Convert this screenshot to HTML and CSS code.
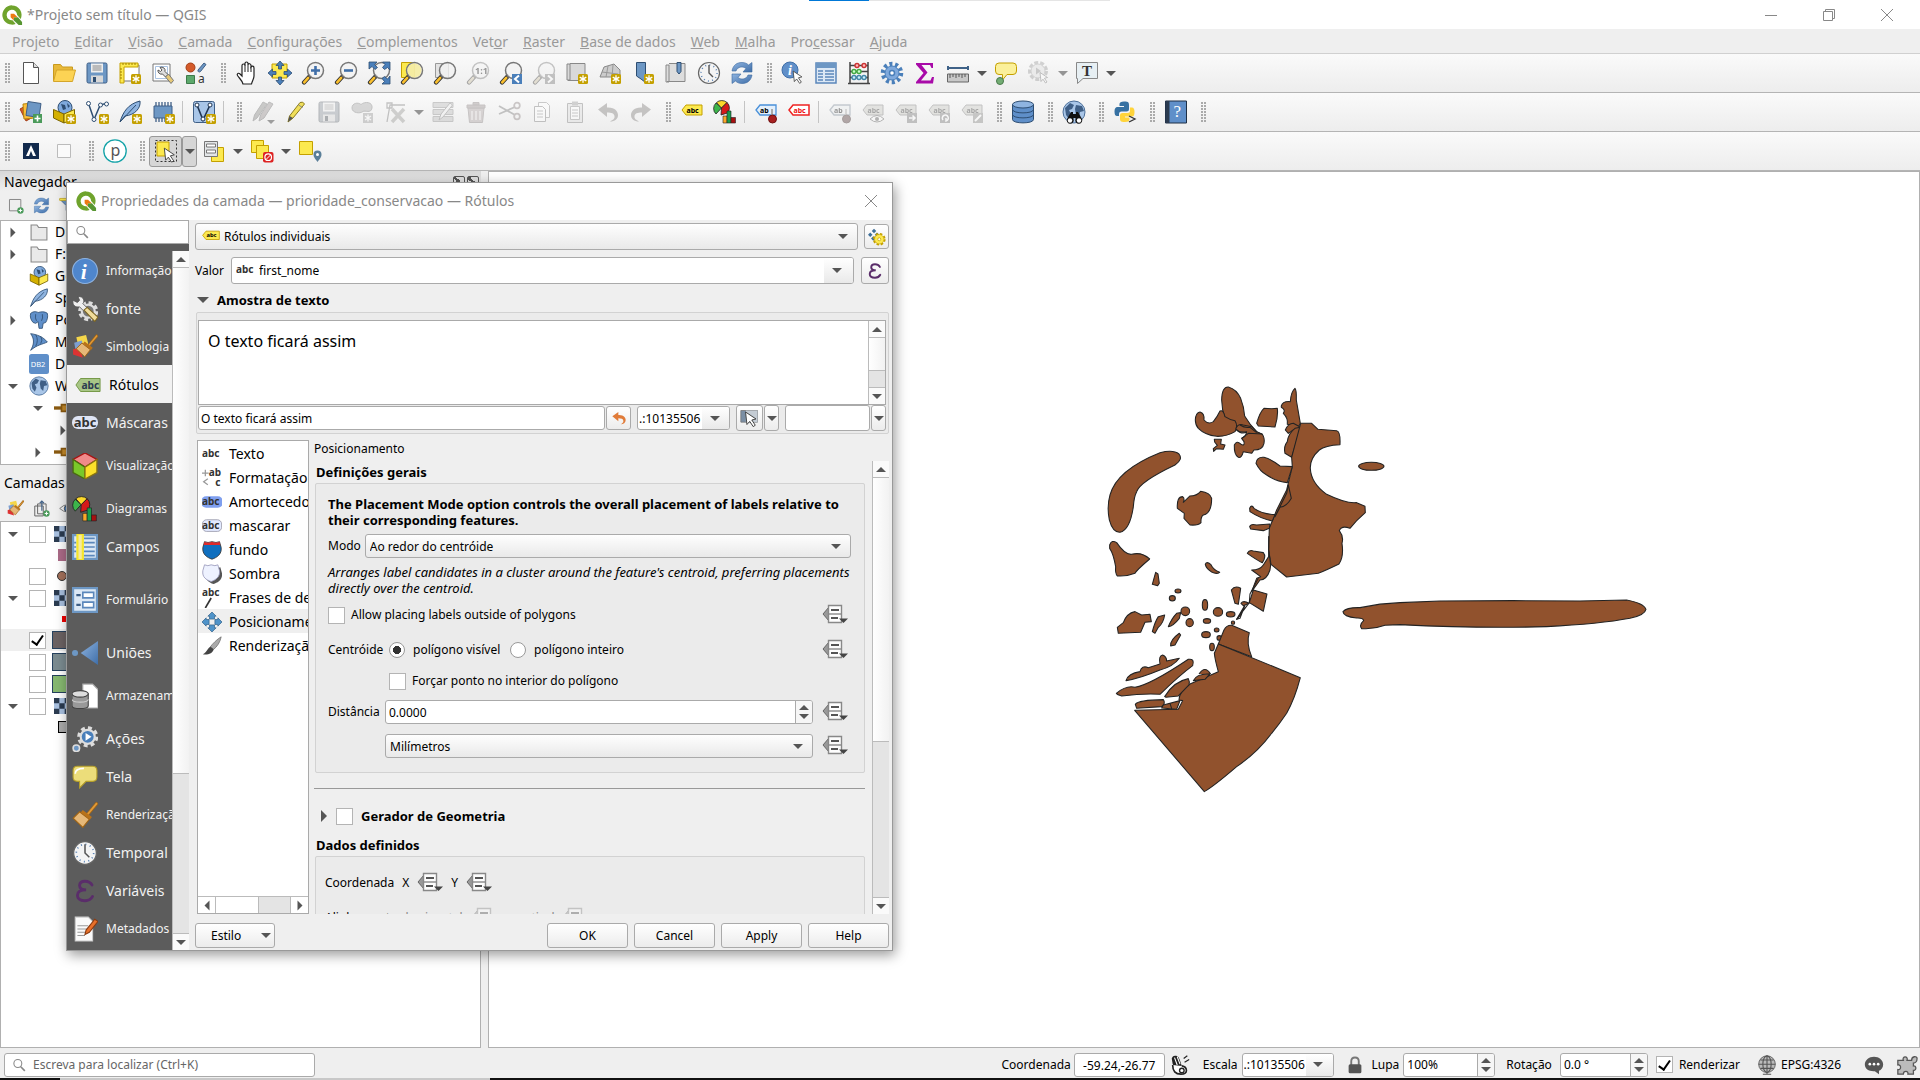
FILE: index.html
```html
<!DOCTYPE html>
<html lang="pt-BR">
<head>
<meta charset="utf-8">
<title>*Projeto sem título — QGIS</title>
<link rel="stylesheet" href="styles.css">
</head>
<body>
<svg class="defs" aria-hidden="true">
<defs>
<linearGradient id="g-blue" x1="0" y1="0" x2="1" y2="1"><stop offset="0" stop-color="#8fb4e0"/><stop offset="1" stop-color="#3f6ea8"/></linearGradient>
<symbol id="b-star" viewBox="0 0 10 10"><rect width="10" height="10" rx="1.5" fill="#c4a000"/><path d="M5 1.2v7.6M1.7 3.1l6.6 3.8M8.3 3.1L1.7 6.9" stroke="#fff" stroke-width="1.3"/></symbol>
<symbol id="b-lens" viewBox="0 0 24 24"><path d="M3 21.500l5.500-6" stroke="#333" stroke-width="4.200" stroke-linecap="round"/><path d="M3.200 21.300l4-4.400" stroke="#fbc02d" stroke-width="2.600" stroke-linecap="round"/><circle cx="14.500" cy="9.500" r="8" fill="#f2f2f2" fill-opacity=".8" stroke="#777" stroke-width="1.500"/></symbol>
<symbol id="b-abc" viewBox="0 0 24 24"><path d="M2 10l4-5h16v10H6z"/></symbol>
<symbol id="i-logo" viewBox="0 0 24 24"><path d="M12 1.500a10.500 10.500 0 1 0 4 20.200l-3.500-4A5.700 5.700 0 1 1 17.600 12l3.900 4.300A10.500 10.500 0 0 0 12 1.500z" fill="#6fa32c"/><path d="M14 14.500h4.500l4.500 5v3.500h-3.800L14 18z" fill="#589632"/><path d="M10.500 10.500h3.700l4 4H14v3.500l-3.500-3.500z" fill="#ee7913"/></symbol>
<symbol id="i-new" viewBox="0 0 24 24"><path d="M4.500 1.500h10l5 5v16h-15z" fill="#fff" stroke="#555"/><path d="M14.500 1.500v5h5" fill="#ddd" stroke="#555"/></symbol>
<symbol id="i-open" viewBox="0 0 24 24"><path d="M1.500 20V3.500h7l2 2.500h10v3" fill="#e8b93a" stroke="#c99a1d"/><path d="M1.500 20.500L4.500 9h19l-3 11.500z" fill="#fcd354" stroke="#d4a52a"/></symbol>
<symbol id="i-save" viewBox="0 0 24 24"><rect x="2" y="2" width="20" height="20" rx="1.500" fill="#6d97c4" stroke="#3f5f86"/><path d="M6 2.500h12v9H6z" fill="#eee"/><path d="M7.500 5h9M7.500 7h9M7.500 9h9" stroke="#888"/><path d="M6 14.500h12v7H6z" fill="#d8d8d8"/><path d="M8 16h3v5H8z" fill="#2e4e72"/></symbol>
<symbol id="i-layout" viewBox="0 0 24 24"><path d="M5 4h16v16H5z" fill="#fff" stroke="#777"/><path d="M2 2h18v4H6v16H2z" fill="#fce94f" stroke="#c4a000"/><path d="M5 2v2M8 2v2M11 2v2M14 2v2M17 2v2M2 8h2M2 11h2M2 14h2M2 17h2" stroke="#a08000"/><use href="#b-star" x="13" y="13" width="10" height="10"/></symbol>
<symbol id="i-wrench" viewBox="0 0 24 24"><path d="M2 3h17v17H2z" fill="#fff" stroke="#777"/><path d="M4.500 5.500h12v12h-12z" fill="none" stroke="#aac3e2"/><path d="M9 6.500a3.500 3.500 0 0 1 5 4l3 3-2.500 2.500-3-3a3.500 3.500 0 0 1-4.500-4l2.500 1.500 1.500-1.500z" fill="#ddd" stroke="#555"/><path d="M14.500 16l3-3 5 6.500-2.500 3z" fill="#e5c878" stroke="#777"/></symbol>
<symbol id="i-style" viewBox="0 0 24 24"><circle cx="6.500" cy="6.500" r="4.500" fill="#d45a2a" stroke="#a33e17"/><path d="M14 9l6-7 2 1.500-5.500 7c-1 1-3 .5-2.500-1.500z" fill="#6d97c4" stroke="#3f5f86"/><path d="M2.500 14.500h8v8h-8z" fill="#5ca86b" stroke="#3d7a4a"/><text x="14" y="22" font-size="12" fill="#333">a</text></symbol>
<symbol id="i-hand" viewBox="0 0 24 24"><path d="M8 23c-1-4-4-6-5.500-8.500-1-2 1-3 2.500-1.500L7 15V4.500c0-2 3-2 3 0V2.500c0-2 3-2 3 0V4c0-2 3-1.500 3 .5V6c1-1.500 3-1 3 1v8c0 3-2 5-2.500 8z" fill="#fff" stroke="#222" stroke-width="1.200"/><path d="M10 4v7M13 4v7M16 6v5" stroke="#222"/></symbol>
<symbol id="i-pansel" viewBox="0 0 24 24"><path d="M4 3h15v14H4z" fill="#fce94f" stroke="#c4a000"/><path d="M12 0l4 4.500h-2.500V8h-3V4.500H8zM12 24l4-4.500h-2.500V16h-3v3.500H8zM0 12l4.500-4v2.500H8v3H4.500V16zM24 12l-4.500-4v2.500H16v3h3.500V16z" fill="#4a7fba" stroke="#2e4e72" stroke-width=".8"/></symbol>
<symbol id="i-zin" viewBox="0 0 24 24"><use href="#b-lens"/><path d="M14.500 5v9M10 9.500h9" stroke="#3f6ea8" stroke-width="2.600"/></symbol>
<symbol id="i-zout" viewBox="0 0 24 24"><use href="#b-lens"/><path d="M10 9.500h9" stroke="#3f6ea8" stroke-width="2.600"/></symbol>
<symbol id="i-zfull" viewBox="0 0 24 24"><use href="#b-lens"/><path d="M2 1h8L7.500 3.500l3 3-2.500 2-3-3L2 8zM23 1v8l-2.500-2.500-3 2-2-2 2.500-3L15.500 1zM23 23h-8l2.500-2.500-2.500-3 2.500-2 3 2.500L23 15z" fill="#4a7fba" stroke="#2e4e72" stroke-width=".8"/></symbol>
<symbol id="i-zsel" viewBox="0 0 24 24"><path d="M1.500 1.500h13v15h-13z" fill="#fce94f" stroke="#c4a000"/><use href="#b-lens"/><circle cx="14.500" cy="9.500" r="7" fill="#f5e98a" opacity=".7"/></symbol>
<symbol id="i-zlay" viewBox="0 0 24 24"><path d="M2.500 2.500h13v14h-13z" fill="#e3e3e3" stroke="#999"/><use href="#b-lens"/></symbol>
<symbol id="i-znat" viewBox="0 0 24 24"><use href="#b-lens"/><text x="9" y="13" font-size="9" font-weight="bold">1:1</text></symbol>
<symbol id="i-zlast" viewBox="0 0 24 24"><use href="#b-lens"/><path d="M13 13h10v10H13z" fill="#4a7fba"/><path d="M20 14.500L16 18l4 3.500" fill="none" stroke="#fff" stroke-width="2"/></symbol>
<symbol id="i-znext" viewBox="0 0 24 24"><use href="#b-lens"/><path d="M13 13h10v10H13z" fill="#777"/><path d="M16 14.500l4 3.500-4 3.500" fill="none" stroke="#fff" stroke-width="2"/></symbol>
<symbol id="i-newmap" viewBox="0 0 24 24"><path d="M2 3h3v16H2zM5 2.500h15v17H3" fill="#d9d9d9" stroke="#888"/><use href="#b-star" x="13" y="13" width="10" height="10"/></symbol>
<symbol id="i-3d" viewBox="0 0 24 24"><path d="M2 16L6 6l10-3 6 6v9l-8-2z" fill="#ccc" stroke="#888"/><path d="M4 11l16 2M10 5L8 16M15 4l-1 12" stroke="#999"/><use href="#b-star" x="13" y="13" width="10" height="10"/></symbol>
<symbol id="i-bkm" viewBox="0 0 24 24"><path d="M5.500 1.500h9v20L10 18l-4.500-3z" fill="#6d97c4" stroke="#2e4e72"/><use href="#b-star" x="13" y="13" width="10" height="10"/></symbol>
<symbol id="i-bkms" viewBox="0 0 24 24"><path d="M2 4h3v17H2zM5 2.500h16v18H3" fill="#ddd" stroke="#888"/><path d="M13 1.500h4v9l-2 2.500-2-2.500z" fill="#6d97c4" stroke="#2e4e72"/></symbol>
<symbol id="i-clock" viewBox="0 0 24 24"><circle cx="12" cy="12" r="10.500" fill="#f4f4f4" stroke="#666" stroke-width="1.200"/><circle cx="12" cy="12" r="8" fill="none" stroke="#5b83b5" stroke-width="1.500" stroke-dasharray="1 3.200"/><path d="M12 4v8l4 4" fill="none" stroke="#555" stroke-width="1.400"/></symbol>
<symbol id="i-refresh" viewBox="0 0 24 24"><path d="M2 10C3 4 7 1.500 12 1.500c3 0 5 1 6.500 2.500L22 1.500V11h-9l3-3.500C13 5 7.500 5.500 6 10z" fill="url(#g-blue)" stroke="#3a689f" stroke-width=".6"/><path d="M22 14c-1 6-5 8.500-10 8.500-3 0-5-1-6.500-2.500L2 22.500V13h9l-3 3.500c3 2.500 8.500 2 10-2.500z" fill="url(#g-blue)" stroke="#3a689f" stroke-width=".6"/></symbol>
<symbol id="i-cursor" viewBox="0 0 24 24"><path d="M2 1l15 10-6 1.500 5 7.500-3 2-5-7.500L4 19z" fill="#fff" stroke="#333" stroke-width="1.300"/></symbol>
<symbol id="i-ident" viewBox="0 0 24 24"><circle cx="9" cy="9" r="8" fill="#5f8fc9" stroke="#3f6ea8"/><text x="7" y="14" font-size="14" font-family="Liberation Serif,serif" font-style="italic" font-weight="bold" fill="#fff">i</text><use href="#i-cursor" x="11" y="9" width="14" height="15"/></symbol>
<symbol id="i-table" viewBox="0 0 24 24"><path d="M2 2h20v20H2z" fill="#dce8f5" stroke="#5b87bb" stroke-width="1.500"/><path d="M2 2h20v5H2z" fill="#6d97c4"/><path d="M4 10h5M11 10h9M4 13h5M11 13h9M4 16h5M11 16h9M4 19h5M11 19h9" stroke="#5b87bb" stroke-width="1.400"/></symbol>
<symbol id="i-abacus" viewBox="0 0 24 24"><path d="M3 1v21M21 1v21M1 22.500h22M3 4.500h18M3 10.500h18M3 16.500h18" stroke="#444" stroke-width="1.500"/><g stroke-width="1.400"><g fill="#fbb" stroke="#c33"><circle cx="10" cy="4.500" r="2"/><circle cx="17" cy="4.500" r="2"/></g><g fill="#cfc" stroke="#4a4"><circle cx="7" cy="10.500" r="2"/><circle cx="12" cy="10.500" r="2"/></g><g fill="#cef" stroke="#48a"><circle cx="7" cy="16.500" r="2"/><circle cx="12" cy="16.500" r="2"/><circle cx="17" cy="16.500" r="2"/></g></g></symbol>
<symbol id="i-gear" viewBox="0 0 24 24"><circle cx="12" cy="12" r="9" fill="none" stroke="#4a7fba" stroke-width="4.500" stroke-dasharray="3 2.650"/><circle cx="12" cy="12" r="7" fill="#7fa9dc" stroke="#4a7fba"/><circle cx="12" cy="12" r="2.500" fill="#fff" stroke="#4a7fba" stroke-width="1.500"/></symbol>
<symbol id="i-sigma" viewBox="0 0 24 24"><path d="M3 2h17v5h-1.500L17 4H8.500l6 7.500L8 19.500h9.500l1.500-3.500H21l-1 6.500H3V21l7.500-9L3 3.500z" fill="#a80aa8"/></symbol>
<symbol id="i-measure" viewBox="0 0 24 24"><path d="M2 7h20M2 5v4M22 5v4" stroke="#3f6288" stroke-width="2"/><path d="M1.500 13h21v8h-21z" fill="#c8c8c8" stroke="#666"/><path d="M4 13v4M7 13v3M10 13v4M13 13v3M16 13v4M19 13v3" stroke="#555"/></symbol>
<symbol id="i-tip" viewBox="0 0 24 24"><path d="M5 2h14q3.500 0 3.500 3.500V10q0 3.500-3.500 3.500h-6L8.500 19v-5.500H5q-3.500 0-3.500-3.500V5.500Q1.500 2 5 2z" fill="#fbf09a" stroke="#c4a000"/><circle cx="6" cy="20" r="3.500" fill="#73ad74" stroke="#4a7a4b"/></symbol>
<symbol id="i-action" viewBox="0 0 24 24"><circle cx="11" cy="10" r="8.500" fill="none" stroke="#999" stroke-width="3" stroke-dasharray="4 2"/><circle cx="11" cy="10" r="7" fill="#ddd" stroke="#999"/><path d="M9 6.500l5 3.500-5 3.500z" fill="#888"/><use href="#i-cursor" x="12" y="10" width="12" height="14"/></symbol>
<symbol id="i-text" viewBox="0 0 24 24"><path d="M1.500 1.500h21v16H8l-5.500 5v-5h-1z" fill="#e7eff3" stroke="#888"/><text x="7" y="15" font-family="Liberation Serif,serif" font-weight="bold" font-size="15" fill="#333">T</text></symbol>
<symbol id="i-addlay" viewBox="0 0 24 24"><path d="M1 9l9-5 6 12-9 5z" fill="#d45a2a" stroke="#a33e17"/><path d="M4 4l11-1v15L5 19z" fill="#fcbf3a" stroke="#b8860b"/><path d="M9 1.500l13 2-2 14-13-2z" fill="#6d97c4" stroke="#3f5f86"/><path d="M14 14h9v9h-9z" fill="#4a9a5a"/><path d="M18.500 15.500v6M15.500 18.500h6" stroke="#fff" stroke-width="1.600"/></symbol>
<symbol id="i-gpkg" viewBox="0 0 24 24"><circle cx="13" cy="7.500" r="7" fill="#7fa9dc" stroke="#2e4e72"/><path d="M9 4l4 1 1 4-3 1zM15 3l3 3-2 2z" fill="#2e4e72"/><path d="M1.500 9.500L12 14v9L1.500 18z" fill="#d4b000" stroke="#7a6400"/><path d="M12 14l10.500-4.500V18L12 23z" fill="#fce94f" stroke="#7a6400"/></symbol>
<symbol id="i-vnode" viewBox="0 0 24 24"><path d="M3.500 3.500L9 19.500l6-14q3-2.500 7-1" fill="none" stroke="#2e4e72" stroke-width="1.500"/><g fill="#fff" stroke="#2e4e72"><circle cx="3.500" cy="3.500" r="2"/><circle cx="9" cy="19.500" r="2"/><circle cx="15.500" cy="5" r="2"/><circle cx="21.500" cy="4" r="2"/></g></symbol>
<symbol id="i-feather" viewBox="0 0 24 24"><path d="M2 22C5 12 10 4 22 1c1 7-5 14-15 15z" fill="#8fb4e0" stroke="#2e4e72"/><path d="M2 22L18 5" stroke="#2e4e72"/></symbol>
<symbol id="i-chip" viewBox="0 0 24 24"><path d="M3 6h18v12H3z" fill="#6d97c4" stroke="#3f5f86"/><path d="M5 2v4M8 2v4M11 2v4M14 2v4M17 2v4M20 2v4M5 18v4M8 18v4M11 18v4M14 18v4" stroke="#3f5f86" stroke-width="1.300"/></symbol>
<symbol id="i-virt" viewBox="0 0 24 24"><rect x="1.500" y="1.500" width="21" height="21" rx="2" fill="#a9c6e8" stroke="#3f5f86"/><path d="M5 5l6 15 7-15" fill="none" stroke="#1f3552" stroke-width="1.600"/><g fill="#fff" stroke="#1f3552"><circle cx="5" cy="5" r="2"/><circle cx="11" cy="19" r="2"/><circle cx="18" cy="5" r="2"/></g></symbol>
<symbol id="i-pencil" viewBox="0 0 24 24"><path d="M4 22l1.500-6L16 2.500q3-1.500 4.500 1.500L9 18z" fill="#f0df5a" stroke="#8a7a20"/><path d="M4 22l1.500-6L9 18z" fill="#555"/><path d="M14.500 5l4 2.500" stroke="#888"/></symbol>
<symbol id="i-pencils" viewBox="0 0 24 24"><path d="M2 21l1.500-6L12 2l4 2L6 18z" fill="#887" stroke="#666"/><path d="M8 21l1.500-6L18 2l4 2-9 14z" fill="#a88" stroke="#666"/><path d="M16 20h8l-4 4z" fill="#222"/></symbol>
<symbol id="i-blob" viewBox="0 0 24 24"><path d="M2 8c0-5 6-6 9-3.500C15 1 23 2 22 8s-7 2-9 3.500C10 14 2 13 2 8z" fill="#aaa" stroke="#777"/><path d="M13 13h10v10H13z" fill="#999"/><path d="M18 14.500v7M15 16l6 4M21 16l-6 4" stroke="#fff" stroke-width="1.300"/></symbol>
<symbol id="i-vertex" viewBox="0 0 24 24"><path d="M4 22L7 5h15M4 3h5v5H4z" fill="none" stroke="#777" stroke-width="1.300"/><path d="M9 9l12 13M21 9L9 22" stroke="#998" stroke-width="3.500"/></symbol>
<symbol id="i-multi" viewBox="0 0 24 24"><path d="M2 2.500h20v5H2zM2 9.500h20v5H2zM2 16.500h20v5H2z" fill="#bbb" stroke="#888"/><path d="M8 20l2-6 9-11 2.500 2L12 17z" fill="#eee" stroke="#777"/></symbol>
<symbol id="i-trash" viewBox="0 0 24 24"><path d="M4 8h16l-1.500 14.500h-13z" fill="#c99" stroke="#977"/><path d="M3 5h18v3H3zM9 2.500h6V5H9z" fill="#b88" stroke="#977"/><path d="M8 11v9M12 11v9M16 11v9" stroke="#fff"/></symbol>
<symbol id="i-cut" viewBox="0 0 24 24"><path d="M2 6l16 9M2 14l16-7" stroke="#777" stroke-width="1.800"/><circle cx="20" cy="5.500" r="2.800" fill="none" stroke="#a77" stroke-width="1.800"/><circle cx="20" cy="16.500" r="2.800" fill="none" stroke="#a77" stroke-width="1.800"/></symbol>
<symbol id="i-copy" viewBox="0 0 24 24"><path d="M8.500 2.500h8l3 3v12h-11z" fill="#fff" stroke="#888"/><path d="M4.500 6.500h8l3 3v12h-11z" fill="#fff" stroke="#777"/><path d="M7 11h6M7 14h6M7 17h6" stroke="#888"/></symbol>
<symbol id="i-group" viewBox="0 0 24 24"><path d="M2.500 8.500h12v14h-12zM6.500 5.500h12v14h-12z" fill="#eee" stroke="#666" stroke-width="1.400"/><path d="M12.500 15V1.500M9.500 4.500l3-3 3 3" fill="none" stroke="#3f5f86" stroke-width="1.600"/><circle cx="19" cy="19" r="4.500" fill="#4a9a5a"/><path d="M19 16.500v5M16.500 19h5" stroke="#fff" stroke-width="1.400"/></symbol>
<symbol id="i-paste" viewBox="0 0 24 24"><path d="M4.500 3.500h15v19h-15z" fill="#ddd" stroke="#777"/><path d="M7.500 6.500h9v13h-9z" fill="#fff" stroke="#888"/><path d="M9 1.500h6v4H9z" fill="#999"/><path d="M9 10h6M9 13h6M9 16h6" stroke="#888"/></symbol>
<symbol id="i-undo" viewBox="0 0 24 24"><path d="M2 9.500L11 3v4.500c8-.5 11 4 11 7.500 0 4-3 6.500-8 6.500 3-1.500 5-3 4.500-5.500-.3-2.500-3-3.500-7.500-3.500V17z" fill="currentColor"/></symbol>
<symbol id="i-abcY" viewBox="0 0 24 24"><use href="#b-abc" fill="#fce94f" stroke="#c4a000"/><text class="tg" x="6.500" y="12.500">abc</text></symbol>
<symbol id="i-abcR" viewBox="0 0 24 24"><use href="#b-abc" fill="#fff" stroke="#e22" stroke-width="1.500"/><text class="tg" x="6.500" y="12.500" fill="#e11">abc</text></symbol>
<symbol id="i-abcP" viewBox="0 0 24 24"><use href="#b-abc" fill="#e3effb" stroke="#4a90d9" stroke-width="1.300"/><text class="tg" x="6" y="12.500">ab</text><path d="M18 9v9" stroke="#aaa" stroke-width="2"/><circle cx="18.500" cy="19" r="4" fill="#a82020" stroke="#701010"/></symbol>
<symbol id="b-abcG" viewBox="0 0 24 24"><use href="#b-abc" fill="#ccc9a8" stroke="#777"/><text class="tg" x="6.500" y="12.500" fill="#333">abc</text></symbol>
<symbol id="i-abcM" viewBox="0 0 24 24"><use href="#b-abcG"/><path d="M13 13h10v10H13z" fill="#777"/><path d="M15 18h6M18.500 15.500L21 18l-2.500 2.500" fill="none" stroke="#fff" stroke-width="1.500"/></symbol>
<symbol id="i-abcT" viewBox="0 0 24 24"><use href="#b-abcG"/><path d="M13 13h10v10H13z" fill="#777"/><path d="M16 20a3 3 0 1 1 3 1v-3" fill="none" stroke="#fff" stroke-width="1.500"/></symbol>
<symbol id="i-abcC" viewBox="0 0 24 24"><use href="#b-abcG"/><path d="M13 13h10v10H13z" fill="#887"/><path d="M15 21l6-6" stroke="#fff" stroke-width="2"/></symbol>
<symbol id="i-abcE" viewBox="0 0 24 24"><use href="#b-abcG"/><path d="M9 19q7-7 14 0-7 6-14 0z" fill="#fff" stroke="#555"/><circle cx="16" cy="19" r="2" fill="#555"/></symbol>
<symbol id="i-diag" viewBox="0 0 24 24"><path d="M8.500 8L3 14A7.500 7.500 0 0 1 3 3z" fill="#3cb44b" stroke="#222" stroke-width=".8"/><path d="M8.500 8L3.500 2.500a8 8 0 0 1 10.500 0z" fill="#fcd82a" stroke="#222" stroke-width=".8"/><path d="M8.500 8L14 2.500a7.500 7.500 0 0 1 .5 10.500L8 15z" fill="#d41a1a" stroke="#222" stroke-width=".8"/><path d="M10 16h4v7h-4z" fill="#fca82a" stroke="#222" stroke-width=".6"/><path d="M14 11h4v12h-4z" fill="#1a9c4a" stroke="#222" stroke-width=".6"/><path d="M18 17.500h4.500V23H18z" fill="#a81010" stroke="#222" stroke-width=".6"/></symbol>
<symbol id="i-db" viewBox="0 0 24 24"><path d="M1.500 4.500v15c0 4.500 21 4.500 21 0v-15z" fill="#5f8fc9" stroke="#2e4e72"/><ellipse cx="12" cy="4.500" rx="10.500" ry="3.500" fill="#8fb4e0" stroke="#2e4e72"/><path d="M1.500 9.500c0 4.500 21 4.500 21 0M1.500 14.500c0 4.500 21 4.500 21 0" fill="none" stroke="#2e4e72"/></symbol>
<symbol id="i-globe" viewBox="0 0 24 24"><circle cx="12" cy="12" r="11" fill="#a9c6e8" stroke="#4c6f99"/><path d="M3 8l5-5 4 2-2 4-3 1 2 4-2 5-3-4zM14 5l6 1 2 5-4 1-1 6-3-3-1-6z" fill="#3f5f86"/></symbol>
<symbol id="i-msearch" viewBox="0 0 24 24"><use href="#i-globe"/><path d="M9 12h2v2h3v-2h2l4 7a3.500 3.500 0 1 1-6.500 0v-1h-2v1a3.500 3.500 0 1 1-6.500 0z" fill="#111"/><circle cx="8" cy="20.500" r="2.200" fill="#fff"/><circle cx="17" cy="20.500" r="2.200" fill="#fff"/></symbol>
<symbol id="i-python" viewBox="0 0 24 24"><path d="M11 1.500c5 0 5 1.500 5 4V9q0 2.500-2.500 2.500h-5Q6 11.500 6 14v2H4q-2.500 0-2.500-4.500T4.500 7H11V6H6.500V4q0-2.500 4.500-2.500z" fill="#3771a2"/><path d="M12 22c-5 0-5-1.500-5-4v-3q0-2 2.500-2h5Q17 13 17 10.500V7.500h2q2.500 0 2.500 4.500T19 16.500h-7v1h4.500v2Q16.500 22 12 22z" fill="#ffd43b"/><path d="M16 16l6 3-6 3" fill="none" stroke="#333" stroke-width="1.300"/></symbol>
<symbol id="i-help" viewBox="0 0 24 24"><path d="M1.500 1h21v22h-21z" fill="#5f8fc9" stroke="#1f2f44"/><path d="M1.500 1h4v22h-4z" fill="#2b3b50"/><text x="9.500" y="17" font-family="Liberation Serif,serif" font-size="17" fill="#fff">?</text></symbol>
<symbol id="i-A" viewBox="0 0 24 24"><path d="M4 4h16v16H4z" fill="#122a4d"/><path d="M7 17l5-11 5 11h-3l-2-5-2 5z" fill="#fff"/></symbol>
<symbol id="i-blank" viewBox="0 0 24 24"><path d="M5.500 5.500h13v13h-13z" fill="#fafafa" stroke="#bbb"/></symbol>
<symbol id="i-p" viewBox="0 0 24 24"><circle cx="12" cy="12" r="11.200" fill="#fff" stroke="#15a3a8" stroke-width="1.300"/><text x="7.500" y="16.500" font-size="16" fill="#555">p</text></symbol>
<symbol id="i-select" viewBox="0 0 24 24"><path d="M3 3h12v14H3z" fill="#fce94f" stroke="#c4a000"/><path d="M1.500 1.500h21v21h-21z" fill="none" stroke="#333" stroke-dasharray="2 2"/><use href="#i-cursor" x="9" y="8" width="16" height="17"/></symbol>
<symbol id="i-form" viewBox="0 0 24 24"><path d="M9.500 8.500h12v14h-12z" fill="#fce94f" stroke="#c4a000"/><path d="M2.500 2.500h13v15h-13z" fill="#e3e6e8" stroke="#777"/><path d="M4.500 5h9v3h-9zM4.500 11h9v3h-9z" fill="#fff" stroke="#777"/></symbol>
<symbol id="i-desel" viewBox="0 0 24 24"><path d="M1.500 1.500h12v12h-12z" fill="#fce94f" stroke="#c4a000"/><path d="M6.500 6.500h12v13h-12z" fill="#fce94f" stroke="#c4a000"/><rect x="13" y="13" width="10.500" height="10.500" rx="2" fill="#d22"/><circle cx="18.200" cy="18.200" r="3.300" fill="none" stroke="#fff" stroke-width="1.200"/><path d="M16 20.500l4.500-4.500" stroke="#fff"/></symbol>
<symbol id="i-pin" viewBox="0 0 24 24"><path d="M1.500 2.500h13v13h-13z" fill="#fce94f" stroke="#c4a000"/><path d="M19.500 23c-3-4-4-5.500-4-7.500a4 4 0 0 1 8 0c0 2-1 3.500-4 7.500z" fill="#5b7f99"/><circle cx="19.500" cy="15.500" r="1.500" fill="#fff"/></symbol>
<symbol id="i-folder" viewBox="0 0 24 24"><path d="M2.500 21.500v-18h7l2 3h10v15z" fill="#e9e9e9" stroke="#888" stroke-width="1.300"/></symbol>
<symbol id="i-pg" viewBox="0 0 24 24"><path d="M2 4c4-3 7-2 9-1 3-1 8-1.500 11 1 1 4 0 8-2 11l-3 1-1 6h-4l-1-8-3 2-3-1C2 12 1 8 2 4z" fill="#5f8fc9" stroke="#2e4e72"/><path d="M8 5q-1 5 1 8M16 5q1 5-1 8" fill="none" stroke="#2e4e72"/></symbol>
<symbol id="i-ms" viewBox="0 0 24 24"><path d="M2 2c8 1 15 4 20 10-6 3-12 3-20 10 4-7 5-13 0-20z" fill="#5f8fc9" stroke="#2e4e72"/><path d="M8 3q4 7 0 14M14 5q3 5 0 9" fill="none" stroke="#2e4e72"/></symbol>
<symbol id="i-db2" viewBox="0 0 24 24"><rect x="0" y="0" width="24" height="24" rx="3" fill="#5f8fc9"/><text x="2" y="15.500" font-size="9" fill="#fff">DB2</text></symbol>
<symbol id="i-plug" viewBox="0 0 24 24"><path d="M0 12h12" stroke="#8a5a10" stroke-width="4"/><path d="M9 8h14v8H9z" fill="#c58a2a" stroke="#8a5a10" stroke-width="2"/></symbol>
<symbol id="i-add" viewBox="0 0 24 24"><path d="M3.500 3.500h16v16h-16z" fill="#eee" stroke="#888" stroke-width="1.400"/><circle cx="19" cy="19" r="4.500" fill="#4a9a5a"/><path d="M19 16.500v5M16.500 19h5" stroke="#fff" stroke-width="1.400"/></symbol>
<symbol id="i-filter" viewBox="0 0 24 24"><path d="M1 3h22l-8 9v10l-5-3v-7z" fill="#6d97c4" stroke="#3f5f86"/><path d="M1 2h22v3H1z" fill="#fce94f" stroke="#c4a000" stroke-width=".8"/></symbol>
<symbol id="i-eye" viewBox="0 0 24 24"><path d="M1 12Q12 1 23 12 12 22 1 12z" fill="#eee" stroke="#777" stroke-width="1.300"/><circle cx="12" cy="12" r="4.500" fill="#4a7fba" stroke="#333"/></symbol>
<symbol id="i-raster" viewBox="0 0 24 24"><path d="M0 0h24v24H0z" fill="#a9c1e0"/><path d="M0 0h8v8H0zM16 0h8v8h-8zM8 8h8v8H8zM0 16h8v8H0zM16 16h8v8h-8z" fill="#2b3b50"/></symbol>
<symbol id="i-search" viewBox="0 0 24 24"><circle cx="10" cy="9.500" r="6.800" fill="none" stroke="#888" stroke-width="1.800"/><path d="M15 15l7 7" stroke="#888" stroke-width="2.800"/></symbol>
<symbol id="i-info" viewBox="0 0 24 24"><circle cx="12" cy="12" r="11.500" fill="#4f86cc" stroke="#8db3e2"/><text x="8" y="19" font-size="20" font-family="Liberation Serif,serif" font-style="italic" font-weight="bold" fill="#fff">i</text></symbol>
<symbol id="i-source" viewBox="0 0 24 24"><circle cx="15" cy="14" r="7.500" fill="none" stroke="#ddd" stroke-width="3.500" stroke-dasharray="3.500 2.400"/><circle cx="15" cy="14" r="6" fill="#777" stroke="#ddd" stroke-width="2"/><path d="M1 4l4 2 2-2-1.500-3.500C11 0 12 5 10 7l5 5-3 3-5-5C3 11 0 8 1 4z" fill="#eee" stroke="#555" stroke-width=".8"/><path d="M11 13l3-2.500 10 9-3 4z" fill="#f0dc9a" stroke="#7a6420"/></symbol>
<symbol id="i-broom" viewBox="0 0 24 24"><path d="M23.500.5L14 12" stroke="#a06414" stroke-width="3"/><path d="M23 1L13 13" stroke="#e09a3a" stroke-width="1.600"/><path d="M7 9l9 7-6 7.500L1 15z" fill="#e6b878" stroke="#a06414"/><path d="M9 8.500l8.500 6.500" stroke="#b8721a" stroke-width="3"/></symbol>
<symbol id="i-symb" viewBox="0 0 24 24"><path d="M4 3l9-2 2 8-9 3z" fill="#f4d64a"/><path d="M2 8l7-2 2 8-7 4z" fill="#7d9fd0"/><path d="M1 14l6-1 3 9-9-3z" fill="#d33"/><use href="#i-broom" x="3" y="0" width="21" height="22"/></symbol>
<symbol id="i-abcGn" viewBox="0 0 28 24"><path d="M1 12l5-7h21v14H6z" fill="#a8c686" stroke="#6f9440"/><text x="7" y="16" font-size="11" font-weight="bold" fill="#2b3b50">abc</text></symbol>
<symbol id="i-mask" viewBox="0 0 30 24"><rect x="0" y="4" width="30" height="15" rx="7" fill="#dfe5f5"/><text x="2" y="17" font-size="15" font-weight="bold" fill="#333">abc</text></symbol>
<symbol id="i-cube" viewBox="0 0 24 24"><path d="M12 0l11 6-11 7L1 6z" fill="#f08a8a" stroke="#a11" stroke-width="1.200"/><path d="M1 6l11 7v11L1 18z" fill="#7ac82a" stroke="#4a6a10" stroke-width="1.200"/><path d="M23 6l-11 7v11l11-6z" fill="#fce02a" stroke="#8a7410" stroke-width="1.200"/></symbol>
<symbol id="i-fields" viewBox="0 0 24 24"><path d="M1 1h22v22H1z" fill="#dce8f5" stroke="#6d97c4" stroke-width="2"/><path d="M11 4h10M11 8h10M11 12h10M11 16h10M11 20h10M2 8h2M2 12h2M2 16h2" stroke="#5b87bb" stroke-width="1.600"/><path d="M5 0h5v24H5z" fill="#f3e9a0" stroke="#f5e52a" stroke-width="2"/></symbol>
<symbol id="i-formu" viewBox="0 0 24 24"><path d="M1 1h22v22H1z" fill="#dce8f5" stroke="#6d97c4" stroke-width="2"/><path d="M4 7.500h4M4 16.500h4" stroke="#3f5f86" stroke-width="2"/><path d="M10 5h10v5H10zM10 14h10v5H10z" fill="#fff" stroke="#5b87bb" stroke-width="1.500"/></symbol>
<symbol id="i-join" viewBox="0 0 24 24"><circle cx="2.800" cy="12" r="2.800" fill="#6d97c4"/><path d="M8 12L24 1v22z" fill="url(#g-blue)"/></symbol>
<symbol id="i-store" viewBox="0 0 24 24"><path d="M10 1h9l5 5v17H10z" fill="#fff" stroke="#aaa"/><path d="M0 10v11c0 3.500 15 3.500 15 0V10z" fill="#999" stroke="#444"/><ellipse cx="7.500" cy="10" rx="7.500" ry="3" fill="#ddd" stroke="#444"/><path d="M0 15c0 3.500 15 3.500 15 0" fill="none" stroke="#ccc"/></symbol>
<symbol id="i-acts" viewBox="0 0 24 24"><circle cx="14.500" cy="10" r="8" fill="none" stroke="#ddd" stroke-width="3.500" stroke-dasharray="3.500 2.780"/><circle cx="14.500" cy="10" r="6.500" fill="#4a7fba" stroke="#ddd" stroke-width="2"/><path d="M12.500 6.500l5.500 3.500-5.500 3.500z" fill="#fff"/><circle cx="4" cy="20.500" r="3" fill="#6d97c4" stroke="#ddd" stroke-width="1.500"/></symbol>
<symbol id="i-disp" viewBox="0 0 24 24"><path d="M5 2h14q4 0 4 4v6q0 4-4 4h-6l-6 6v-6H5q-4 0-4-4V6q0-4 4-4z" fill="#ecdd7a" stroke="#b59f2a"/><path d="M3 9q0-5 8-5" fill="none" stroke="#fff" stroke-width="1.500"/></symbol>
<symbol id="i-eps" viewBox="0 0 24 24"><path d="M18.500 6.500q-2-3.500-6.500-3.500-5 0-5 4 0 4 6 4-8 0-8 5 0 5 7 5 5 0 7-4" fill="none" stroke="#5a2d6a" stroke-width="2.600" stroke-linecap="round"/></symbol>
<symbol id="i-meta" viewBox="0 0 24 24"><path d="M3 1h12l4 4v18H3z" fill="#fafafa" stroke="#ccc"/><path d="M5 9h10M5 12h10M5 15h10M5 18h7" stroke="#999"/><path d="M12 17l1-4 8-10 3 2-8 10z" fill="#e8702a" stroke="#8a3a10"/></symbol>
<symbol id="i-t" viewBox="0 0 24 24"><text class="tb9" x="0" y="15">abc</text></symbol>
<symbol id="i-fmt" viewBox="0 0 24 24"><path d="M4 2v8M0 6h8" stroke="#999" stroke-width="1.500"/><text class="tb9" x="8" y="10">ab</text><path d="M7 13l-5 3.500L7 20" fill="none" stroke="#999" stroke-width="1.500"/><text class="tb9" x="16" y="22">c</text></symbol>
<symbol id="i-buf" viewBox="0 0 24 24"><rect x="-1" y="5" width="26" height="14" rx="6" fill="#7f9fee"/><text class="tb9" x="0" y="16">abc</text></symbol>
<symbol id="i-msk" viewBox="0 0 24 24"><rect x=".5" y="4.500" width="23" height="14" rx="5" fill="#e3eaff" stroke="#99a"/><text class="tb9" x="0" y="16">abc</text></symbol>
<symbol id="i-shield" viewBox="0 0 24 24"><path d="M3 2q4 2 9 0 5 2 9 0l2 7c1 8-5 12-11 14C6 21 0 17 1 9z" fill="#0f6fbf" stroke="#333"/><path d="M3 2q4 2 9 0 5 2 9 0l1 4H2z" fill="#e02a2a"/></symbol>
<symbol id="i-shadow" viewBox="0 0 24 24"><path d="M5 4q4 2 8 0 5 2 9 0l2 7c1 8-5 11-10 13C8 22 3 18 3 11z" fill="#555"/><path d="M3 1q4 2 8 0 5 2 8 0l2 7c1 8-5 11-10 13C5 19 0 16 1 8z" fill="#eef2ff" stroke="#99b"/></symbol>
<symbol id="i-call" viewBox="0 0 24 24"><text class="tb9" x="0" y="10">abc</text><path d="M11 12L4 24" stroke="#333" stroke-width="2"/></symbol>
<symbol id="i-pos" viewBox="0 0 24 24"><path d="M12 0l5 5h-2v3.500H9V5H7zM12 24l5-5h-2v-3.500H9V19H7zM0 12l5-5v2h3.500v6H5v2zM24 12l-5-5v2h-3.500v6H19v2z" fill="#4f93c9" stroke="#2e5e86" stroke-width=".8"/></symbol>
<symbol id="i-brush" viewBox="0 0 24 24"><path d="M23 1c-1 6-5 12-9 15l-4-3C13 9 18 4 23 1z" fill="#aaa" stroke="#777"/><path d="M10 13l4 3c-1 5-7 7-13 6 5-2 5-7 9-9z" fill="#444"/></symbol>
<symbol id="i-ddef" viewBox="0 0 26 22"><path d="M1 10l6-7v14z" fill="#999" stroke="#666"/><path d="M6.500 1.500h13v17h-13z" fill="#fdfdfd" stroke="#888" stroke-width="1.400"/><path d="M6 10h14" stroke="#888" stroke-width="1.400"/><path d="M9 6h8M9 14h7" stroke="#555" stroke-width="1.800"/><path d="M17 14.500h9L21.500 19z" fill="#444"/></symbol>
<symbol id="i-gearY" viewBox="0 0 24 24"><path d="M8 1l3 3-3 3-3-3zM3 6l3 3-3 3-3-3zM12 6l3 3-3 3-3-3zM7 11l3 3-3 3-3-3z" fill="#3f6f99"/><circle cx="15" cy="15" r="6.500" fill="none" stroke="#c4a000" stroke-width="4" stroke-dasharray="3 2.100"/><circle cx="15" cy="15" r="6.300" fill="#fce94f" stroke="#c4a000" stroke-width=".8"/><circle cx="15" cy="15" r="2" fill="#fff" stroke="#c4a000"/></symbol>
<symbol id="i-colsel" viewBox="0 0 24 24"><path d="M1 3h20v14H1z" fill="#7b8fa5" stroke="#777"/><path d="M7 3h14v14H7z" fill="#c4ccd4"/><use href="#i-cursor" x="5" y="3" width="20" height="22"/></symbol>
<symbol id="i-mouse" viewBox="0 0 24 24"><path d="M3 5q1-4 5-3 3 1 4 5l2 6q0 4-4 3-4 0-6-5z" fill="#222"/><path d="M6 4l3 8M9 3l3 8" stroke="#fff" stroke-width="1.200"/><path d="M4 12q0 10 9 10 6 0 6-4t-5-5" fill="#fff" stroke="#222" stroke-width="1.800"/><circle cx="14" cy="18" r="2.500" fill="none" stroke="#222" stroke-width="1.500"/><path d="M16 5l4-3M17 9l5-3" stroke="#222" stroke-width="1.300"/></symbol>
<symbol id="i-lock" viewBox="0 0 24 24"><path d="M7 12V7q0-5 5-5t5 5v5" fill="none" stroke="#777" stroke-width="2.500"/><rect x="3.500" y="11" width="17" height="12" rx="2" fill="#555"/></symbol>
<symbol id="i-crs" viewBox="0 0 24 24"><circle cx="12" cy="11" r="10" fill="#bbb" stroke="#555"/><path d="M2 11h20M4 6h16M4 16h16M12 1v22M7 23h10" fill="none" stroke="#555" stroke-width="1.300"/><ellipse cx="12" cy="11" rx="5" ry="10" fill="none" stroke="#555" stroke-width="1.300"/></symbol>
<symbol id="i-msg" viewBox="0 0 24 24"><path d="M12 2c6 0 11 4 11 9.500 0 4-2.500 6.500-5 7.500v4l-5-3.500C6 20 1 17 1 11.500 1 6 6 2 12 2z" fill="#555"/><g fill="#fff"><circle cx="7" cy="11" r="1.600"/><circle cx="12" cy="11" r="1.600"/><circle cx="17" cy="11" r="1.600"/></g></symbol>
<symbol id="i-puzzle" viewBox="0 0 24 24"><path d="M2 7h6c-2-5 6-5 4 0h5c0-5 6-5 6-2s-2 5-4 5v3c3-1 4 5 0 5v4h-6c1-4-5-4-5 0H2v-5c4 1 4-6 0-5z" fill="#bbb" stroke="#555" stroke-width="1.400"/></symbol>
</defs>
</svg>

<header class="titlebar">
  <svg class="logo"><use href="#i-logo"/></svg>
  <h1 class="caption">*Projeto sem título — QGIS</h1>
  <div class="progress"><span></span></div>
  <div class="winctl">
    <button aria-label="Minimizar"><svg viewBox="0 0 12 12"><path d="M0 6.500h12"/></svg></button>
    <button aria-label="Restaurar"><svg viewBox="0 0 12 12"><path d="M.5 2.500h9v9h-9zM2.500 2.500v-2h9v9h-2"/></svg></button>
    <button aria-label="Fechar"><svg viewBox="0 0 12 12"><path d="M0 0l12 12M12 0L0 12"/></svg></button>
  </div>
</header>
<nav class="menubar">
  <a href="#">Pro<u>j</u>eto</a><a href="#"><u>E</u>ditar</a><a href="#"><u>V</u>isão</a><a href="#"><u>C</u>amada</a><a href="#"><u>C</u>onfigurações</a><a href="#"><u>C</u>omplementos</a><a href="#">Vet<u>o</u>r</a><a href="#"><u>R</u>aster</a><a href="#"><u>B</u>ase de dados</a><a href="#"><u>W</u>eb</a><a href="#"><u>M</u>alha</a><a href="#">Pro<u>c</u>essar</a><a href="#"><u>A</u>juda</a>
</nav>
<div class="toolbar">
  <div class="group">
    <button aria-label="Novo"><svg><use href="#i-new"/></svg></button>
    <button aria-label="Abrir"><svg><use href="#i-open"/></svg></button>
    <button aria-label="Salvar"><svg><use href="#i-save"/></svg></button>
    <button aria-label="Novo layout"><svg><use href="#i-layout"/></svg></button>
    <button aria-label="Gerenciador de layouts"><svg><use href="#i-wrench"/></svg></button>
    <button aria-label="Gerenciador de estilos"><svg><use href="#i-style"/></svg></button>
  </div>
  <div class="group">
    <button aria-label="Mover mapa"><svg><use href="#i-hand"/></svg></button>
    <button aria-label="Mover para seleção"><svg><use href="#i-pansel"/></svg></button>
    <button aria-label="Aproximar"><svg><use href="#i-zin"/></svg></button>
    <button aria-label="Afastar"><svg><use href="#i-zout"/></svg></button>
    <button aria-label="Ver tudo"><svg><use href="#i-zfull"/></svg></button>
    <button aria-label="Ver seleção"><svg><use href="#i-zsel"/></svg></button>
    <button aria-label="Ver camada"><svg><use href="#i-zlay"/></svg></button>
    <button disabled aria-label="Resolução nativa"><svg><use href="#i-znat"/></svg></button>
    <button aria-label="Última visualização"><svg><use href="#i-zlast"/></svg></button>
    <button disabled aria-label="Próxima visualização"><svg><use href="#i-znext"/></svg></button>
    <button aria-label="Nova vista"><svg><use href="#i-newmap"/></svg></button>
    <button aria-label="Nova vista 3D"><svg><use href="#i-3d"/></svg></button>
    <button aria-label="Novo favorito"><svg><use href="#i-bkm"/></svg></button>
    <button aria-label="Favoritos"><svg><use href="#i-bkms"/></svg></button>
    <button aria-label="Controle temporal"><svg><use href="#i-clock"/></svg></button>
    <button aria-label="Atualizar"><svg><use href="#i-refresh"/></svg></button>
  </div>
  <div class="group">
    <button aria-label="Identificar"><svg><use href="#i-ident"/></svg></button>
    <button aria-label="Tabela de atributos"><svg><use href="#i-table"/></svg></button>
    <button aria-label="Calculadora"><svg><use href="#i-abacus"/></svg></button>
    <button aria-label="Processamento"><svg><use href="#i-gear"/></svg></button>
    <button aria-label="Estatísticas"><svg><use href="#i-sigma"/></svg></button>
    <button aria-label="Medir"><svg><use href="#i-measure"/></svg></button>
    <button class="drop" aria-label="Mais medidas"></button>
    <button aria-label="Dicas"><svg><use href="#i-tip"/></svg></button>
    <button disabled aria-label="Ação"><svg><use href="#i-action"/></svg></button>
    <button disabled class="drop" aria-label="Mais ações"></button>
    <button aria-label="Anotação"><svg><use href="#i-text"/></svg></button>
    <button class="drop" aria-label="Mais anotações"></button>
  </div>
</div>
<div class="toolbar">
  <div class="group">
    <button aria-label="Fonte de dados"><svg><use href="#i-addlay"/></svg></button>
    <button aria-label="Novo GeoPackage"><svg><use href="#i-gpkg"/><use href="#b-star" x="14" y="14" width="10" height="10"/></svg></button>
    <button aria-label="Novo shapefile"><svg><use href="#i-vnode"/><use href="#b-star" x="14" y="14" width="10" height="10"/></svg></button>
    <button aria-label="Novo SpatiaLite"><svg><use href="#i-feather"/><use href="#b-star" x="14" y="14" width="10" height="10"/></svg></button>
    <button aria-label="Nova camada temporária"><svg><use href="#i-chip"/><use href="#b-star" x="14" y="14" width="10" height="10"/></svg></button>
    <i class="sep"></i>
    <button aria-label="Nova camada virtual"><svg><use href="#i-virt"/><use href="#b-star" x="14" y="14" width="10" height="10"/></svg></button>
    <i class="sep"></i>
  </div>
  <div class="group">
    <button disabled aria-label="Edições atuais"><svg><use href="#i-pencils"/></svg></button>
    <button aria-label="Editar"><svg><use href="#i-pencil"/></svg></button>
    <button disabled aria-label="Salvar edições"><svg><use href="#i-save"/></svg></button>
    <button disabled aria-label="Adicionar feição"><svg><use href="#i-blob"/></svg></button>
    <button disabled aria-label="Vértices"><svg><use href="#i-vertex"/></svg></button>
    <button disabled class="drop" aria-label="Mais vértices"></button>
    <button disabled aria-label="Modificar atributos"><svg><use href="#i-multi"/></svg></button>
    <button disabled aria-label="Excluir"><svg><use href="#i-trash"/></svg></button>
    <button disabled aria-label="Recortar"><svg><use href="#i-cut"/></svg></button>
    <button disabled aria-label="Copiar"><svg><use href="#i-copy"/></svg></button>
    <button disabled aria-label="Colar"><svg><use href="#i-paste"/></svg></button>
    <button disabled class="fade" aria-label="Desfazer"><svg><use href="#i-undo"/></svg></button>
    <button disabled class="fade flip" aria-label="Refazer"><svg><use href="#i-undo"/></svg></button>
  </div>
  <div class="group">
    <button aria-label="Rótulos"><svg><use href="#i-abcY"/></svg></button>
    <button aria-label="Diagramas"><svg><use href="#i-diag"/></svg></button>
    <i class="sep"></i>
    <button aria-label="Rótulos fixados"><svg><use href="#i-abcP"/></svg></button>
    <button aria-label="Rótulos não colocados"><svg><use href="#i-abcR"/></svg></button>
    <i class="sep"></i>
    <button disabled aria-label="Fixar rótulo"><svg><use href="#i-abcP"/></svg></button>
    <button disabled aria-label="Mostrar rótulo"><svg><use href="#i-abcE"/></svg></button>
    <button disabled aria-label="Mover rótulo"><svg><use href="#i-abcM"/></svg></button>
    <button disabled aria-label="Girar rótulo"><svg><use href="#i-abcT"/></svg></button>
    <button disabled aria-label="Alterar rótulo"><svg><use href="#i-abcC"/></svg></button>
  </div>
  <div class="group"><button aria-label="Banco de dados"><svg><use href="#i-db"/></svg></button></div>
  <div class="group"><button aria-label="MetaSearch"><svg><use href="#i-msearch"/></svg></button></div>
  <div class="group"><button aria-label="Python"><svg><use href="#i-python"/></svg></button></div>
  <div class="group"><button aria-label="Ajuda"><svg><use href="#i-help"/></svg></button></div>
  <div class="group"></div>
</div>
<div class="toolbar">
  <div class="group">
    <button aria-label="Complemento A"><svg><use href="#i-A"/></svg></button>
    <button aria-label="Complemento"><svg><use href="#i-blank"/></svg></button>
  </div>
  <div class="group"><button aria-label="Planet"><svg><use href="#i-p"/></svg></button></div>
  <div class="group">
    <button class="on" aria-label="Selecionar"><svg><use href="#i-select"/></svg></button>
    <button class="on drop" aria-label="Mais seleções"></button>
    <button aria-label="Selecionar por valor"><svg><use href="#i-form"/></svg></button>
    <button class="drop" aria-label="Mais"></button>
    <button aria-label="Desfazer seleção"><svg><use href="#i-desel"/></svg></button>
    <button class="drop" aria-label="Mais opções"></button>
    <button aria-label="Selecionar por localização"><svg><use href="#i-pin"/></svg></button>
  </div>
</div>

<main class="workspace">
  <aside class="dock">
    <h2 class="docktitle">Navegador<span class="dockbtn"></span><span class="dockbtn"></span></h2>
    <div class="docktools"><svg><use href="#i-add"/></svg><svg><use href="#i-refresh"/></svg><svg><use href="#i-filter"/></svg></div>
    <ul class="tree browser">
      <li><i class="tw"></i><svg><use href="#i-folder"/></svg>D:\</li>
      <li><i class="tw"></i><svg><use href="#i-folder"/></svg>F:\</li>
      <li><i></i><svg><use href="#i-gpkg"/></svg>GeoPackage</li>
      <li><i></i><svg><use href="#i-feather"/></svg>SpatiaLite</li>
      <li><i class="tw"></i><svg><use href="#i-pg"/></svg>PostGIS</li>
      <li><i></i><svg><use href="#i-ms"/></svg>MSSQL</li>
      <li><i></i><svg><use href="#i-db2"/></svg>DB2</li>
      <li><i class="tw open"></i><svg><use href="#i-globe"/></svg>WMS/WMTS</li>
      <li class="l1"><i class="tw open"></i><svg><use href="#i-plug"/></svg></li>
      <li class="l2"><i class="tw"></i></li>
      <li class="l1"><i class="tw"></i><svg><use href="#i-plug"/></svg></li>
    </ul>
    <h2 class="docktitle layers">Camadas</h2>
    <div class="docktools low"><svg><use href="#i-symb"/></svg><svg><use href="#i-group"/></svg><svg><use href="#i-eye"/></svg></div>
    <ul class="tree list">
      <li><i class="tw open"></i><input type="checkbox" aria-label="Grupo 1"><svg><use href="#i-raster"/></svg></li>
      <li class="sym"><i></i><b class="sw pink"></b></li>
      <li><i></i><input type="checkbox" aria-label="Pontos"><b class="dot"></b></li>
      <li><i class="tw open"></i><input type="checkbox" aria-label="Grupo 2"><svg><use href="#i-raster"/></svg></li>
      <li class="sym"><i></i><b class="sw red"></b></li>
      <li class="cur"><i></i><input type="checkbox" checked aria-label="prioridade_conservacao"><b class="sw dark"></b></li>
      <li><i></i><input type="checkbox" aria-label="Camada cinza"><b class="sw slate"></b></li>
      <li><i></i><input type="checkbox" aria-label="Camada verde"><b class="sw green"></b></li>
      <li><i class="tw open"></i><input type="checkbox" aria-label="Grupo 3"><svg><use href="#i-raster"/></svg></li>
      <li class="sym"><i></i><b class="sw box"></b></li>
    </ul>
  </aside>
  <section class="canvas">
    <svg viewBox="489 172 1430 874" preserveAspectRatio="xMinYMin meet" aria-label="Mapa">
      <g transform="translate(1080 370) scale(.3333)" fill="#91522d" stroke="#232323" stroke-width="3.200" stroke-linejoin="round">
        <path d="M428 120L425 90Q426 50 445 51Q470 58 482 85Q492 110 494 138Q510 165 530 185L545 193L465 170L435 145Z"/>
        <path d="M346 150Q347 128 360 126Q374 130 372 150Q385 165 400 155Q412 140 420 123Q430 118 435 140Q450 150 465 152Q475 168 465 185Q440 200 410 199Q375 195 355 175Q346 165 346 150Z"/>
        <path d="M468 175Q475 160 490 165L515 170L530 185L547 193Q555 205 552 220Q548 240 522 240L515 250L490 245Q485 265 475 262Q462 255 463 225Q470 210 482 222Q495 230 492 215L485 205Q498 200 500 185Q480 190 468 178Z"/>
        <path d="M468 178Q485 195 500 186M480 165Q495 175 510 172L530 188M485 205L505 190L547 192" fill="none"/>
        <path d="M530 160Q540 125 552 115L575 116L592 115Q595 140 585 171L535 168Z"/>
        <path d="M403 208L424 208L422 222L435 225L430 238L410 236L401 244L400 236L412 226L404 216Z"/>
        <path d="M604 108Q608 93 631 95Q633 65 645 55Q650 60 649 90L661 160L655 172L622 163Q625 145 610 130Q618 120 604 112Z"/>
        <path d="M616 180Q625 160 640 160L662 172L640 180L625 190Z"/>
        <path d="M662 172L645 175Q625 190 622 215Q610 230 615 250L635 262Z"/>
        <path d="M662 160L695 160L714 178L770 182Q782 184 780 224Q735 226 718 240Q690 265 691 295Q693 340 740 373Q800 402 830 398L855 409L856 428Q830 450 810 475Q785 465 778 482Q792 500 786 520Q792 560 777 582Q740 600 715 610L620 621L573 583L566 540L568 475L590 420L620 360L637 290L635 262Z"/>
        <path d="M528 280Q530 260 552 262Q575 268 600 288L637 290L622 338Q590 335 560 315Q540 305 528 280Z"/>
        <path d="M509 415Q515 402 522 415Q545 432 585 434L577 453Q540 445 510 425Z"/>
        <path d="M509 470Q512 460 530 465L570 462L568 475L550 482L512 477Z"/>
        <path d="M625 345L634 385Q620 410 600 412L585 440L620 370Z"/>
        <path d="M502 550Q508 538 520 543L550 548Q560 560 547 578Q530 570 502 550Z"/>
        <path d="M566 500V540L572 585L570 600Q560 630 540 630L515 665L530 625L542 620L515 600Q540 600 550 585L566 560Z"/>
        <path d="M520 660L561 672L550 724L508 698Z"/>
        <path d="M535 625L510 672L508 698L470 748L480 745L495 705" fill="none"/>
        <path d="M297 252Q310 268 285 285Q180 335 170 365Q162 380 160 410Q150 480 120 487Q98 488 88 450Q80 410 90 375Q110 300 240 248Q280 238 297 252Z"/>
        <path d="M292 415Q290 380 308 380Q315 385 310 397L330 378Q350 378 362 364Q390 368 395 385Q395 430 370 435Q362 440 363 458Q355 467 330 465L312 445L313 430Z"/>
        <path d="M89 525Q95 508 110 518Q135 555 155 553Q185 545 209 567Q170 600 165 610Q140 620 112 618Q105 610 107 590Q100 550 89 535Z"/>
        <path d="M376 583Q380 573 392 583Q400 600 419 607Q410 614 395 606Q378 595 376 583Z"/>
        <path d="M227 607L234 612L238 640L233 647L217 643Z"/>
        <path d="M454 660Q465 645 482 655Q480 670 475 703L465 700Z"/>
        <path d="M112 772L130 758Q140 730 165 725L185 735L210 733L214 755L195 757L182 787L115 790Z"/>
        <path d="M235 740L254 735Q250 760 235 772L225 790L217 785Q225 755 235 740Z"/>
        <path d="M290 730L302 728L298 745Q280 768 265 770Q275 745 290 730Z"/>
        <path d="M298 790L302 795L285 825L272 828Q270 810 298 790Z"/>
        <path d="M483 700Q490 690 507 700L490 707ZM492 710L482 735L470 748Z"/>
        <ellipse cx="294" cy="663" rx="9" ry="6"/><ellipse cx="277" cy="685" rx="9" ry="8"/><ellipse cx="316" cy="724" rx="13" ry="13"/><ellipse cx="375" cy="705" rx="8" ry="16"/><ellipse cx="329" cy="758" rx="11" ry="12"/><ellipse cx="414" cy="726" rx="14" ry="13"/><ellipse cx="381" cy="753" rx="11" ry="7"/><ellipse cx="452" cy="733" rx="13" ry="8"/><ellipse cx="378" cy="794" rx="13" ry="9"/><ellipse cx="410" cy="780" rx="7" ry="6"/><ellipse cx="396" cy="831" rx="7" ry="11"/><ellipse cx="459" cy="758" rx="5" ry="5"/><ellipse cx="418" cy="804" rx="7" ry="7"/>
        <ellipse cx="874" cy="289" rx="38" ry="12"/>
        <path d="M432 780Q440 765 455 766L508 788Q498 820 515 860L415 822Z"/>
        <path d="M415 822L661 923Q645 985 620 1030Q600 1060 575 1090Q530 1150 470 1190Q400 1250 373 1265L164 1021L295 1018L308 992L297 990Q297 965 330 942L415 905Q405 870 403 850Z"/>
        <path d="M138 932Q145 910 180 905Q185 885 205 893L240 882Q235 858 248 855Q260 860 260 873L298 865Q280 890 240 900Q180 925 138 932Z"/>
        <path d="M109 970Q140 945 165 952Q210 945 325 868Q345 865 338 887Q300 915 240 973Q190 970 125 978Q112 975 109 970Z"/>
        <path d="M254 980Q280 935 325 926Q330 935 327 945L295 978L258 982Z"/>
        <path d="M166 1003Q175 990 250 989Q258 1000 245 1010L170 1015Z"/>
        <path d="M250 1005L300 992L290 1018L245 1014ZM270 1000L275 1015M340 932Q350 910 390 912L375 928ZM357 912Q375 885 392 912"/>
        <path d="M789 725Q800 712 840 713Q900 700 960 698L1080 693L1300 692L1500 693L1640 690Q1692 700 1698 718Q1695 735 1650 745Q1560 762 1400 770Q1200 776 960 764L915 766Q880 779 845 776Q836 765 851 752Q850 743 830 744Q790 740 789 725Z"/>
      </g>
    </svg>
  </section>
</main>

<footer class="status">
  <label class="locator"><svg><use href="#i-search"/></svg><input type="text" placeholder="Escreva para localizar (Ctrl+K)" aria-label="Localizar"></label>
  <label for="coord">Coordenada</label><input id="coord" class="field coord" value="-59.24,-26.77">
  <svg class="s22 g4"><use href="#i-mouse"/></svg>
  <label for="esc" class="g12">Escala</label><div class="combo esc"><input id="esc" value=".:10135506"><button aria-label="Escalas"></button></div>
  <svg class="s18 g12"><use href="#i-lock"/></svg>
  <label for="lupa" class="g8">Lupa</label><div class="spin lupa"><input id="lupa" value="100%"><button aria-label="Ajustar lupa"></button></div>
  <label for="rot" class="g11">Rotação</label><div class="spin rot"><input id="rot" value="0.0 °"><button aria-label="Ajustar rotação"></button></div>
  <label class="g8 check"><input type="checkbox" checked>Renderizar</label>
  <svg class="s20 g17"><use href="#i-crs"/></svg><span class="g4">EPSG:4326</span>
  <svg class="s20 g23"><use href="#i-msg"/></svg><svg class="s22 g12"><use href="#i-puzzle"/></svg>
</footer>
<div class="strip"><span></span></div>

<div class="dialog" role="dialog" aria-label="Propriedades da camada">
  <div class="dtitle"><svg class="logo"><use href="#i-logo"/></svg><h2 class="caption">Propriedades da camada — prioridade_conservacao — Rótulos</h2><button aria-label="Fechar"><svg viewBox="0 0 12 12"><path d="M0 0l12 12M12 0L0 12"/></svg></button></div>
  <div class="dbody">
    <div class="side">
      <label class="find"><svg><use href="#i-search"/></svg><input type="text" aria-label="Buscar"></label>
      <div class="sidewrap">
        <ul class="pages">
          <li class="sm"><svg><use href="#i-info"/></svg>Informação</li>
          <li><svg><use href="#i-source"/></svg>fonte</li>
          <li class="sm"><svg><use href="#i-symb"/></svg>Simbologia</li>
          <li class="sel"><svg><use href="#i-abcGn"/></svg>Rótulos</li>
          <li><svg><use href="#i-mask"/></svg>Máscaras</li>
          <li class="sm h48"><svg><use href="#i-cube"/></svg>Visualização</li>
          <li class="sm"><svg><use href="#i-diag"/></svg>Diagramas</li>
          <li><svg><use href="#i-fields"/></svg>Campos</li>
          <li class="sm h68"><svg><use href="#i-formu"/></svg>Formulário</li>
          <li><svg><use href="#i-join"/></svg>Uniões</li>
          <li class="sm h48"><svg><use href="#i-store"/></svg>Armazenamento</li>
          <li><svg><use href="#i-acts"/></svg>Ações</li>
          <li><svg><use href="#i-disp"/></svg>Tela</li>
          <li class="sm"><svg><use href="#i-broom"/></svg>Renderização</li>
          <li><svg><use href="#i-clock"/></svg>Temporal</li>
          <li><svg><use href="#i-eps"/></svg>Variáveis</li>
          <li class="sm"><svg><use href="#i-meta"/></svg>Metadados</li>
        </ul>
        <div class="vbar"><b class="up"></b><b class="thumb t76"></b><b class="rest"></b><b class="down"></b></div>
      </div>
    </div>
    <div class="content">
      <div class="row r27">
        <div class="select fill tagged"><svg><use href="#i-abcY"/></svg><select aria-label="Tipo de rótulo"><option>Rótulos individuais</option></select></div>
        <button class="btn g25" aria-label="Configurações de posicionamento"><svg><use href="#i-gearY"/></svg></button>
      </div>
      <div class="row r27 valor">
        <label for="valor">Valor</label>
        <div class="combo fill"><svg class="abc"><use href="#i-t"/></svg><input id="valor" value="first_nome"><button aria-label="Campos"></button></div>
        <button class="btn g28" aria-label="Expressão"><svg><use href="#i-eps"/></svg></button>
      </div>
      <h3 class="section"><i class="tri down"></i>Amostra de texto</h3>
      <div class="sample">
        <div class="preview"><p>O texto ficará assim</p><div class="vbar"><b class="up"></b><b class="thumb"></b><b class="rest r16"></b><b class="down"></b></div></div>
        <div class="row r24">
          <input class="field fill" value="O texto ficará assim" aria-label="Texto de amostra">
          <button class="btn undo" aria-label="Restaurar texto"><svg><use href="#i-undo"/></svg></button>
          <div class="combo scale"><input value=".:10135506" aria-label="Escala da amostra"><button aria-label="Escalas"></button></div>
          <button class="btn cursor" aria-label="Escala do mapa"><svg><use href="#i-colsel"/></svg></button><button class="btn arrow" aria-label="Mais"></button>
          <button class="btn color" aria-label="Cor de fundo"></button><button class="btn arrow" aria-label="Opções de cor"></button>
        </div>
      </div>
      <div class="lower">
        <div class="opts">
          <ul>
            <li><svg><use href="#i-t"/></svg>Texto</li>
            <li><svg><use href="#i-fmt"/></svg>Formatação</li>
            <li><svg><use href="#i-buf"/></svg>Amortecedor</li>
            <li><svg><use href="#i-msk"/></svg>mascarar</li>
            <li><svg><use href="#i-shield"/></svg>fundo</li>
            <li><svg><use href="#i-shadow"/></svg>Sombra</li>
            <li><svg><use href="#i-call"/></svg>Frases de destaque</li>
            <li class="sel"><svg><use href="#i-pos"/></svg>Posicionamento</li>
            <li><svg><use href="#i-brush"/></svg>Renderização</li>
          </ul>
          <div class="hbar"><b class="left"></b><b class="thumb"></b><b class="rest"></b><b class="right"></b></div>
        </div>
        <div class="pane">
          <p class="ptitle">Posicionamento</p>
          <div class="scroller">
            <div class="form">
              <h4>Definições gerais</h4>
              <fieldset>
                <p class="lead">The Placement Mode option controls the overall placement of labels relative to their corresponding features.</p>
                <div class="row r24 modo"><label for="modo">Modo</label><div class="select fill"><select id="modo"><option>Ao redor do centróide</option></select></div></div>
                <p class="hint">Arranges label candidates in a cluster around the feature's centroid, preferring placements directly over the centroid.</p>
                <div class="row r24 a"><label class="check fill"><input type="checkbox">Allow placing labels outside of polygons</label><button class="dd" aria-label="Substituir"><svg><use href="#i-ddef"/></svg></button></div>
                <div class="row r24 b"><span class="lab">Centróide</span><label class="radio"><input type="radio" name="c" checked>polígono visível</label><label class="radio fill"><input type="radio" name="c">polígono inteiro</label><button class="dd" aria-label="Substituir"><svg><use href="#i-ddef"/></svg></button></div>
                <div class="row r24 a"><span class="lab"></span><label class="check inset"><input type="checkbox">Forçar ponto no interior do polígono</label></div>
                <div class="row r24 a"><label class="lab" for="dist">Distância</label><div class="spin fill"><input id="dist" value="0.0000"><button aria-label="Ajustar"></button></div><button class="dd" aria-label="Substituir"><svg><use href="#i-ddef"/></svg></button></div>
                <div class="row r24 c"><span class="lab"></span><div class="select fill"><select aria-label="Unidade"><option>Milímetros</option></select></div><button class="dd" aria-label="Substituir"><svg><use href="#i-ddef"/></svg></button></div>
              </fieldset>
              <hr>
              <div class="row r24 gen"><i class="tri"></i><label class="check bold"><input type="checkbox">Gerador de Geometria</label></div>
              <h4 class="dados">Dados definidos</h4>
              <fieldset class="coords">
                <div class="row r24"><span>Coordenada</span><span class="g8">X</span><button class="dd" aria-label="Substituir X"><svg><use href="#i-ddef"/></svg></button><span class="g8">Y</span><button class="dd" aria-label="Substituir Y"><svg><use href="#i-ddef"/></svg></button></div>
                <div class="row r24 b"><span>Alinhamento</span><span class="g8 dim">horizontal</span><button disabled class="dd" aria-label="Substituir horizontal"><svg><use href="#i-ddef"/></svg></button><span class="g17 dim">vertical</span><button disabled class="dd" aria-label="Substituir vertical"><svg><use href="#i-ddef"/></svg></button></div>
              </fieldset>
            </div>
            <div class="vbar"><b class="up"></b><b class="thumb t63"></b><b class="rest"></b><b class="down"></b></div>
          </div>
        </div>
      </div>
      <div class="actions">
        <button class="btn estilo">Estilo</button>
        <button class="btn">OK</button><button class="btn">Cancel</button><button class="btn">Apply</button><button class="btn">Help</button>
      </div>
    </div>
  </div>
</div>
</body>
</html>
```
FILE: styles.css
```css
*{box-sizing:border-box}
html,body{height:100%}
body{margin:0;display:flex;flex-direction:column;position:relative;overflow:hidden;background:#efefef;color:#000;font:12px/16px "Noto Sans",sans-serif}
h1,h2,h3,h4,p,ul,fieldset{margin:0;padding:0;font-weight:400}
ul{list-style:none}
button,input,select{font:inherit;color:inherit;margin:0;padding:0;border:0;background:none}
svg{display:block;flex:none}
.defs{position:absolute;width:0;height:0}
.tg{font-size:7px;font-weight:bold}
.tb9{font-size:12px;font-weight:bold;fill:#333}
.fill{flex:1;min-width:0}
.row{display:flex;align-items:center}
.r27{height:27px}
.r24{height:24px}
.g4{margin-left:4px}
.g8{margin-left:8px}
.g11{margin-left:11px}
.g12{margin-left:12px}
.g17{margin-left:17px}
.g23{margin-left:23px}
.s18{width:18px;height:18px}
.s20{width:20px;height:20px}
.s22{width:22px;height:22px}

.titlebar{display:flex;align-items:center;height:29px;flex:none;background:#fff;padding-left:1px;position:relative}
.logo{width:22px;height:22px}
.caption{font-size:14px;color:#888;margin-left:4px;flex:1;white-space:nowrap}
.progress{position:absolute;left:809px;top:0;width:301px;height:1px;background:#e5e5e5}
.progress span{display:block;width:60px;height:1px;background:#0078d7}
.winctl{display:flex;padding-right:4px}
.winctl button{width:58px;height:28px;display:grid;place-items:center}
.winctl svg,.dtitle button svg{width:12px;height:12px;fill:none;stroke:#888}
.menubar{display:flex;gap:15px;height:25px;flex:none;align-items:center;padding:2px 12px 0;border-bottom:1px solid #d0d0d0}
.menubar a{font-size:14px;color:#999;text-decoration:none;line-height:20px}
.toolbar{display:flex;align-items:center;height:39px;flex:none;background:linear-gradient(#fafafa,#ededed);border-bottom:1px solid #b4b4b4}
.group{display:flex;align-items:center}
.group+.group{margin-left:4px}
.group::before{content:"";width:5px;height:20px;margin:0 4px 0 5px;background:radial-gradient(circle at 1px 1px,#aaa 1px,transparent 1px) 0 0/3px 3px}
.toolbar button{width:33px;height:33px;display:grid;place-items:center}
.toolbar button svg{width:24px;height:24px}
.toolbar button:disabled svg{opacity:.4;filter:grayscale(.8)}
.toolbar .drop{width:15px}
.drop::after,.tri,.tw::before,.select::after,.combo button::after,.arrow::after,.estilo::after,.vbar .up::before,.vbar .down::before,.hbar .left::before,.hbar .right::before{content:"";display:block;border:5px solid transparent;border-top-color:#555;border-bottom-width:0;width:0;height:0}
.toolbar .drop:disabled::after{opacity:.6}
.toolbar .fade{color:#8a7a70}
.flip svg{transform:scaleX(-1)}
.toolbar .on{background:#d6d6d6;border:1px solid #999;border-radius:3px;height:31px}
.sep{width:1px;height:22px;margin:0 4px 0 3px;background:#c4c4c4}

.workspace{flex:1;min-height:0;display:flex;gap:7px}
.dock{width:481px;max-width:26%;display:flex;flex-direction:column}
.docktitle{display:flex;align-items:center;gap:2px;height:20px;padding:1px 2px 0 4px;font-size:14px;background:linear-gradient(#d8d8d8,#efefef)}
.docktitle.layers{height:30px;padding-top:5px;background:none}
.dockbtn{width:12px;height:12px;border:1px solid #555;border-radius:2px;background:linear-gradient(45deg,transparent 40%,#555 40% 60%,transparent 60%)}
.dockbtn:first-of-type{margin-left:auto}
.docktools{display:flex;align-items:center;gap:9px;height:29px;padding:0 7px}
.docktools.low{height:26px}
.docktools svg{width:17px;height:17px}
.tree{background:#fff;border:1px solid #b0b0b0;overflow:hidden;font-size:14px}
.browser{height:245px}
.list{flex:1;padding-top:1px}
.tree li{display:flex;align-items:center;height:22px;white-space:nowrap}
.tree li>i{width:28px;flex:none;display:flex;justify-content:center;padding-right:4px}
.tree li svg{width:20px;height:20px;margin-right:6px}
.tw::before{transform:rotate(-90deg)}
.tw.open::before{transform:none}
.tree .l1{padding-left:25px}
.tree .l2{padding-left:50px}
.tree .sym{height:20px}
.tree .cur{background:#efefef}
.list li svg{width:16px;height:16px;margin:0}
.list input{margin-right:8px}
.sw{width:24px;height:18px;border:1px solid #26415e;margin-left:-2px}
.sym .sw{height:12px;margin-left:29px;border-width:0}
.dot{width:10px;height:10px;border:1px solid #333;border-radius:50%;background:#a3705a;margin-left:3px}
.pink{background:#ab6a87}
.sym .red{background:#e00;height:6px;margin-left:33px}
.dark{background:#6b6263}
.slate{background:#7b8b90}
.green{background:#86b870}
.sym .box{background:#aaa;border:1px solid #000}
.canvas{flex:1;min-width:0;background:#fff;border:1px solid #b0b0b0}
.canvas svg{width:100%;height:100%}

input[type=checkbox],input[type=radio]{appearance:none;width:17px;height:17px;flex:none;background:#fff;border:1px solid #b4b4b4}
input[type=radio]{width:16px;height:16px;border-color:#999;border-radius:50%}
input[type=radio]:checked{background:radial-gradient(#333 0 4px,#fff 4px)}
input[type=checkbox]:checked{display:grid;place-items:center}
input[type=checkbox]:checked::before{content:"";width:5px;height:10px;border:solid #000;border-width:0 2px 2px 0;transform:rotate(35deg);margin-bottom:2px}
.field,.combo,.spin,.locator,.find{background:#fff;border:1px solid #aaa;border-radius:3px}
.field{height:24px;padding:1px 2px 0}
.combo,.spin{display:flex;height:24px;overflow:hidden}
.combo input,.spin input{flex:1;min-width:0;padding:1px 0 0 3px}
.combo button{width:27px;padding-right:2px;display:grid;place-items:center;background:linear-gradient(#fff,#e9e9e9)}
.spin button{width:17px;border-left:1px solid #aaa;display:grid;align-content:center;justify-content:center;gap:4px;background:#f6f6f6}
.spin button::before,.spin button::after{content:"";border:5px solid transparent;border-bottom-color:#555;border-top-width:0}
.spin button::after{border-top:5px solid #555;border-bottom-width:0}
.select{display:flex;align-items:center;height:24px;background:linear-gradient(#fefefe,#e9e9e9);border:1px solid #aaa;border-radius:3px;padding:0 9px 0 4px}
.select select{flex:1;appearance:none;min-width:0;height:100%;outline:0;padding-top:1px}
.btn{display:grid;place-items:center;background:linear-gradient(#fff,#ececec);border:1px solid #aaa;border-radius:3px;flex:none}

.status{display:flex;align-items:center;height:30px;flex:none;padding:3px 2px 0 4px}
.locator{display:flex;align-items:center;width:311px;height:24px;margin-right:auto;padding-left:7px;gap:7px}
.locator svg{width:14px;height:14px}
.locator input{flex:1;outline:0}
.locator input::placeholder{color:#666;opacity:1}
.coord{width:91px;margin-left:3px;text-align:center}
.esc{width:92px;margin-left:4px}
.lupa{width:92px;margin-left:4px}
.rot{width:88px;margin-left:8px}
.check,.radio{display:flex;align-items:center;gap:6px}
.strip{height:2px;flex:none;background:#111;padding-left:60px}
.strip span{display:block;width:430px;height:2px;background:#c8c8c8}

.dialog{position:absolute;left:66px;top:182px;width:827px;background:#efefef;border:1px solid #999;box-shadow:2px 4px 12px rgba(0,0,0,.4)}
.dtitle{display:flex;align-items:center;height:37px;background:#fff;padding:0 15px 2px 8px}
.dbody{display:flex;height:730px}
.side{width:122px;display:flex;flex-direction:column;background:#5c5c5c}
.find{display:flex;align-items:center;height:24px;padding-left:7px;border-radius:0;margin-bottom:7px}
.find svg{width:14px;height:14px}
.find input{flex:1;min-width:0;outline:0}
.sidewrap{display:flex;flex:1;min-height:0}
.pages{flex:1;min-width:0;overflow:hidden;color:#f2f2f2;font-size:14px}
.pages li{display:flex;align-items:center;height:38px;padding:1px 0 0 5px;gap:8px;white-space:nowrap}
.pages li svg{width:26px;height:26px}
.pages .sm{font-size:12px;padding-top:2px}
.pages .h48{height:48px}
.pages .h68{height:68px}
.pages .sel{background:#f2f2f2;color:#000;padding-left:8px}
.vbar{width:17px;flex:none;display:flex;flex-direction:column;border-left:1px solid #bbb;background:#fafafa}
.vbar .up,.vbar .down{height:17px;display:grid;place-items:center;flex:none}
.vbar .up::before{transform:rotate(180deg)}
.vbar .up{border-bottom:1px solid #bbb}
.vbar .down{border-top:1px solid #bbb}
.vbar .thumb{flex:1;background:linear-gradient(90deg,#fff,#f2f2f2);border-bottom:1px solid #bbb}
.vbar .rest{flex:1;background:#e4e4e4}
.vbar .t76{flex:19 1 0}
.vbar .t76+.rest{flex:6 1 0}
.vbar .t63{flex:17 1 0}
.vbar .t63+.rest{flex:10 1 0}
.vbar .r16{flex:none;height:16px}
.content{flex:1;min-width:0;display:flex;flex-direction:column;padding:3px 3px 0 6px}
.tagged svg{width:20px;height:20px;margin:0 3px 0 1px}
.g25{width:25px;height:25px;margin-left:6px}
.g25 svg,.g28 svg{width:18px;height:18px}
.g28{width:28px;height:27px;margin-left:7px}
.valor{margin-top:7px}
.valor label{width:36px}
.valor .combo button{width:29px;padding-right:4px}
.content .r27>.combo,.content .r27>.select{height:27px}
.combo .abc{width:20px;height:20px;margin:2px 0 0 4px}
.section{display:flex;align-items:center;gap:8px;height:28px;padding:4px 0 0 2px}
.section,h4,.lead,.bold{font-size:13px;font-weight:700}
.tri{border-width:6px;border-bottom-width:0;transform:rotate(-90deg)}
.tri.down{transform:none}
.sample{margin-left:1px;height:122px;border:1px solid #d2d2d2;border-radius:2px;padding:7px 2px 0 1px;background:#ebebeb}
.preview{display:flex;height:85px;background:#fff;border:1px solid #aaa;margin-bottom:1px}
.preview p{flex:1;padding:9px;font-size:16px;line-height:22px}
.undo{width:25px;height:24px;color:#e07b39;margin:0 6px 0 1px}
.undo svg{width:16px;height:16px}
.scale{width:93px;margin-right:6px}
.scale input,.esc input{padding-left:1px}
.cursor{width:27px;height:26px}
.cursor svg{width:20px;height:20px}
.arrow{width:15px;height:26px;margin-left:1px}
.color{width:85px;height:26px;margin-left:6px;background:#fff}
.lower{display:flex;gap:5px;height:474px;margin:6px 0 0 2px}
.opts{width:112px;display:flex;flex-direction:column;background:#fff;border:1px solid #aaa;font-size:14px}
.opts ul{flex:1;overflow:hidden}
.opts li{display:flex;align-items:center;height:24px;padding:1px 0 0 4px;gap:7px;white-space:nowrap}
.opts li svg{width:20px;height:20px}
.opts .sel{background:#efefef}
.hbar{display:flex;height:17px;border-top:1px solid #bbb}
.hbar .left,.hbar .right{width:17px;display:grid;place-items:center}
.hbar .left::before{transform:rotate(90deg)}
.hbar .right::before{transform:rotate(-90deg)}
.hbar .thumb{flex:4;border:solid #bbb;border-width:0 1px}
.hbar .rest{flex:3;background:#e4e4e4;border-right:1px solid #bbb}
.pane{flex:1;min-width:0;display:flex;flex-direction:column}
.ptitle{height:21px;padding-top:1px}
.scroller{flex:1;min-height:0;display:flex}
.form{flex:1;min-width:0;overflow:hidden;padding-right:7px}
h4{height:22px;line-height:22px;padding-left:2px}
fieldset{min-width:0;margin-left:1px;border:1px solid #d2d2d2;border-radius:2px;background:#ebebeb;padding:12px 13px 14px 12px}
.modo{margin-top:6px;gap:4px}
.hint{font-size:13px;font-style:italic;margin-top:6px;margin-right:-8px}
.lead{margin-right:-8px}
.a{margin-top:7px}
.b{margin-top:11px}
.c{margin-top:10px}
.lab{width:57px;flex:none}
.radio{padding-left:4px;gap:8px;width:121px}
.inset{padding-left:4px}
.dd{width:26px;height:22px;flex:none;margin-left:8px}
.fill+.dd{margin:0 3px 0 9px}
.dd svg{width:26px;height:22px}
.dd:disabled{opacity:.4}
hr{height:1px;border:0;background:#999;margin:15px 0}
.gen{padding-left:4px;gap:6px}
.gen .check{gap:8px}
.dados{margin-top:6px}
.coords{padding:14px 9px}
.dim{color:#888}
.actions{display:flex;gap:6px;padding-top:9px}
.actions .btn{width:81px;height:25px}
.actions .estilo{width:80px;margin-right:auto;display:flex;align-items:center;justify-content:space-between;padding:0 3px 0 15px}
```
